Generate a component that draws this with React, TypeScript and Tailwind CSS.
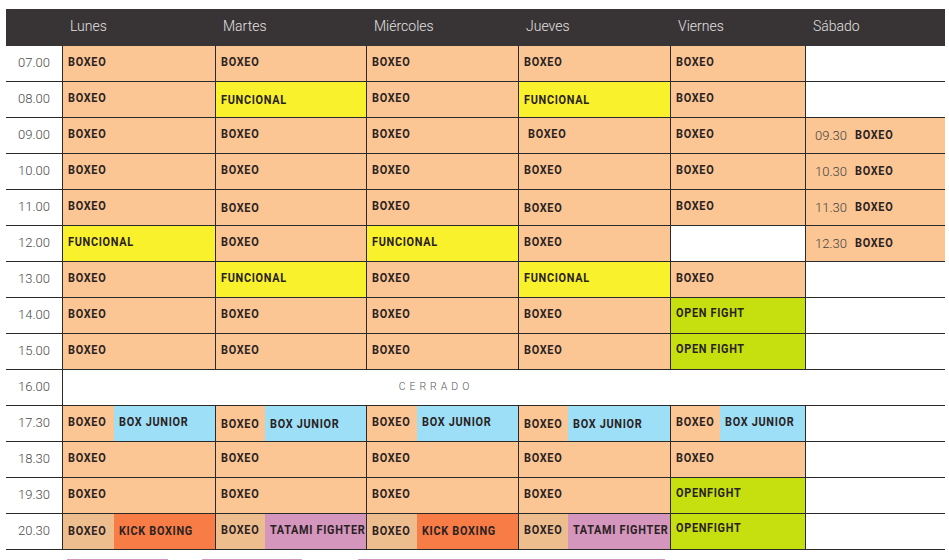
import React from "react";

type Seg = { label: string; bg: string; w?: string; pad?: string };
type Cell =
  | null
  | { segs: Seg[]; dy?: number; indent?: boolean }
  | { sat: string };

const P = "bg-[#fbc693]";
const Y = "bg-[#f9f12c]";
const G = "bg-[#c6e00f]";
const B = "bg-[#9ddff7]";
const O = "bg-[#f77c46]";
const K = "bg-[#d596be]";
const D = "bg-[#eebd8e]";

const bx = (dy = -2, indent = false): Cell => ({ segs: [{ label: "BOXEO", bg: P }], dy, indent });
const fn = (dy = -2): Cell => ({ segs: [{ label: "FUNCIONAL", bg: Y }], dy });
const of = (label: string, dy = -2): Cell => ({ segs: [{ label, bg: G }], dy });
const split = (w: string, second: string, bg2: string, firstBg: string, dy: number): Cell => ({
  segs: [
    { label: "BOXEO", bg: firstBg, w },
    { label: second, bg: bg2 },
  ],
  dy,
});

const rows: { time: string; cells: Cell[] | "closed" }[] = [
  { time: "07.00", cells: [bx(), bx(), bx(), bx(), bx(), null] },
  { time: "08.00", cells: [bx(), fn(0), bx(), fn(0), bx(), null] },
  { time: "09.00", cells: [bx(), bx(), bx(), bx(-2, true), bx(), { sat: "09.30" }] },
  { time: "10.00", cells: [bx(), bx(), bx(), bx(), bx(), { sat: "10.30" }] },
  { time: "11.00", cells: [bx(), bx(0), bx(), bx(0), bx(), { sat: "11.30" }] },
  { time: "12.00", cells: [fn(), bx(), fn(), bx(), null, { sat: "12.30" }] },
  { time: "13.00", cells: [bx(), fn(), bx(), fn(), bx(), null] },
  { time: "14.00", cells: [bx(), bx(), bx(), bx(), of("OPEN FIGHT", -3), null] },
  { time: "15.00", cells: [bx(), bx(), bx(), bx(), of("OPEN FIGHT", -3), null] },
  { time: "16.00", cells: "closed" },
  {
    time: "17.30",
    cells: [
      split("w-[51px]", "BOX JUNIOR", B, P, -2),
      split("w-[49px]", "BOX JUNIOR", B, P, 0),
      split("w-[50px]", "BOX JUNIOR", B, P, -2),
      split("w-[49px]", "BOX JUNIOR", B, P, 0),
      split("w-[49px]", "BOX JUNIOR", B, P, -2),
      null,
    ],
  },
  { time: "18.30", cells: [bx(), bx(), bx(), bx(), bx(), null] },
  { time: "19.30", cells: [bx(), bx(), bx(), bx(), of("OPENFIGHT", -3), null] },
  {
    time: "20.30",
    cells: [
      split("w-[51px]", "KICK BOXING", O, D, -1),
      split("w-[49px]", "TATAMI FIGHTER", K, D, -2),
      split("w-[50px]", "KICK BOXING", O, D, -1),
      split("w-[49px]", "TATAMI FIGHTER", K, D, -2),
      of("OPENFIGHT", -4),
      null,
    ],
  },
];

const days = ["Lunes", "Martes", "Miércoles", "Jueves", "Viernes", "Sábado"];

const label =
  "inline-block origin-left scale-x-[0.87] font-['Roboto',sans-serif] font-bold text-[12.5px] tracking-[0.8px] text-[#2a2222] leading-none whitespace-nowrap";

function DayCell({ cell }: { cell: Cell }) {
  const base = "h-[36px] border-b border-l border-[#2a2a2a] flex";
  if (cell === null) return <div className={base + " bg-white"} />;
  if ("sat" in cell) {
    return (
      <div className={base + " " + P + " items-center pl-[9px]"}>
        <span className="flex items-center">
          <span className="font-['Roboto',sans-serif] font-light text-[13px] text-[#444] leading-none mr-[8px]">{cell.sat}</span>
          <span className={label}>BOXEO</span>
        </span>
      </div>
    );
  }
  return (
    <div className={base}>
      {cell.segs.map((s, i) => (
        <div
          key={i}
          className={
            s.bg +
            " h-full flex items-center overflow-hidden " +
            (s.w ? s.w + " shrink-0 " : "flex-1 ") +
            (i === 0 ? (cell.indent ? "pl-[9px]" : "pl-[5px]") : "pl-[5px]")
          }
        >
          <span className={label} style={{ transform: `translateY(${(cell.dy ?? 0) + 1}px)` }}>
            {s.label}
          </span>
        </div>
      ))}
    </div>
  );
}

export default function App() {
  return (
    <div className="w-[949px] h-[560px] overflow-hidden bg-white pl-[6px] pt-[9px] font-['Roboto',sans-serif]">
      <div className="grid grid-cols-[56px_153px_151px_152px_152px_135px_140px] w-[939px]">
        <div className="h-[37px] bg-[#383435]" />
        {days.map((d) => (
          <div key={d} className="h-[37px] bg-[#383435] flex items-center pl-[8px] pb-[4px]">
            <span className="font-light text-[14px] text-[#e2e0e0] leading-none">{d}</span>
          </div>
        ))}
        {rows.map((r) => (
          <React.Fragment key={r.time}>
            <div className="h-[36px] border-b border-[#2a2a2a] bg-white flex items-center justify-center pb-[2px]">
              <span className="font-light text-[13px] text-[#4a4a4a] leading-none">{r.time}</span>
            </div>
            {r.cells === "closed" ? (
              <div className="col-span-6 h-[36px] border-b border-l border-[#2a2a2a] bg-white flex items-center justify-center pr-[136px]">
                <span className="font-light text-[10.5px] tracking-[4px] text-[#555] leading-none">CERRADO</span>
              </div>
            ) : (
              r.cells.map((c, i) => <DayCell key={i} cell={c} />)
            )}
          </React.Fragment>
        ))}
      </div>
      <div className="relative h-[11px]">
        <div className="absolute bottom-0 left-[61px] w-[101px] h-[2px] bg-[#d596be]" />
        <div className="absolute bottom-0 left-[196px] w-[100px] h-[2px] bg-[#d596be]" />
        <div className="absolute bottom-0 left-[352px] w-[307px] h-[2px] bg-[#d596be]" />
      </div>
    </div>
  );
}
